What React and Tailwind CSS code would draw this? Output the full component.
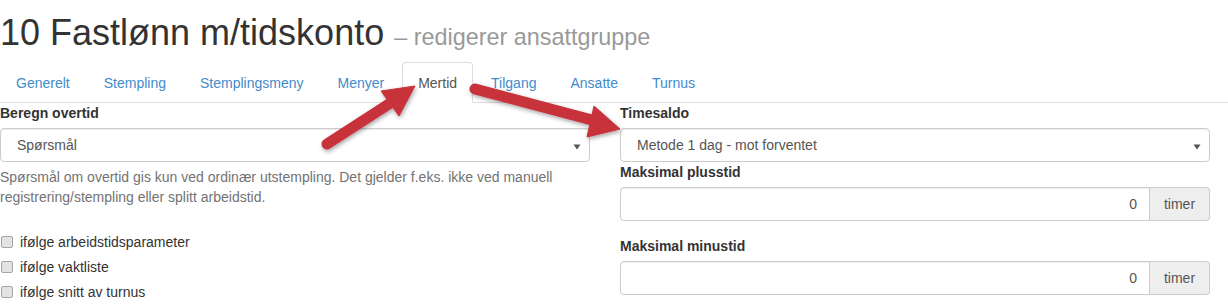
import React from 'react';

const tabs = ['Generelt', 'Stempling', 'Stemplingsmeny', 'Menyer', 'Mertid', 'Tilgang', 'Ansatte', 'Turnus'];

function Caret() {
    return (
        <svg width="8" height="6" viewBox="0 0 8 6" className="absolute right-[8px] top-[15px]">
            <path d="M0.5 0.5 L7.5 0.5 L4 5.5 Z" fill="#555" />
        </svg>
    );
}

function Select({ value }) {
    return (
        <div className="relative h-[34px] border border-[#ccc] rounded-[4px] bg-white shadow-[inset_0_1px_1px_rgba(0,0,0,0.075)] pl-[16px] flex items-center text-[#555]">
            {value}
            <Caret />
        </div>
    );
}

function TimerInput() {
    return (
        <div className="flex h-[34px]">
            <div className="flex-1 border border-[#ccc] rounded-l-[4px] shadow-[inset_0_1px_1px_rgba(0,0,0,0.075)] flex items-center justify-end pr-[12px] text-[#555]">0</div>
            <div className="w-[60px] border border-l-0 border-[#ccc] rounded-r-[4px] bg-[#eee] flex items-center justify-center text-[#555]">timer</div>
        </div>
    );
}

function Check({ label }) {
    return (
        <div className="flex items-center h-[20px] mt-[5px] first:mt-0">
            <span className="w-[12px] h-[12px] ml-[1px] rounded-[2px] border border-[#a5a5a5] bg-[#e3e3e3]" />
            <span className="ml-[7px]">{label}</span>
        </div>
    );
}

// piler som peker på fanen og på timesaldo-feltet
function Arrows() {
    return (
        <svg className="absolute inset-0 pointer-events-none" width="1228" height="305">
            <defs>
                <filter id="skygge" x="-20%" y="-20%" width="140%" height="140%">
                    <feDropShadow dx="1" dy="2" stdDeviation="2" floodColor="#000" floodOpacity="0.35" />
                </filter>
            </defs>
            <g filter="url(#skygge)" fill="#c8323a" stroke="#c8323a">
                <line x1="327" y1="144" x2="392" y2="102" strokeWidth="11" strokeLinecap="round" />
                <polygon points="415,86 399,116 381,91" strokeWidth="1" strokeLinejoin="round" />
                <line x1="475" y1="89" x2="592" y2="120" strokeWidth="11" strokeLinecap="round" />
                <polygon points="620,129 587,137 594,106" strokeWidth="1" strokeLinejoin="round" />
            </g>
        </svg>
    );
}

export default function App() {
    return (
        <div className="relative w-[1228px] h-[305px] overflow-hidden bg-white text-[#333] text-[14px] leading-[20px] font-['Liberation_Sans',Arial,sans-serif]">
            <h1 className="h-[40px] mt-[13px] text-[36px] leading-[40px] font-normal whitespace-nowrap">
                10 Fastlønn m/tidskonto <small className="text-[23.4px] text-[#999]">– redigerer ansattgruppe</small>
            </h1>

            <ul className="mt-[9px] flex border-b border-[#ddd] h-[41px]">
                {tabs.map(t => (
                    <li key={t} className="mr-[2px]">
                        {t === 'Mertid' ? (
                            <span className="block h-[41px] px-[15px] py-[10px] border border-[#ddd] border-b-transparent rounded-t-[4px] bg-white text-[#555]">{t}</span>
                        ) : (
                            <span className="block h-[41px] px-[15px] py-[10px] border border-transparent text-[#428bca]">{t}</span>
                        )}
                    </li>
                ))}
            </ul>

            <div className="flex gap-[30px]">
                <div className="w-[590px]">
                    <div className="font-bold mb-[5px]">Beregn overtid</div>
                    <Select value="Spørsmål" />
                    <p className="mt-[5px] text-[#737373]">
                        Spørsmål om overtid gis kun ved ordinær utstempling. Det gjelder f.eks. ikke ved manuell
                        <br />
                        registrering/stempling eller splitt arbeidstid.
                    </p>
                    <div className="mt-[25px]">
                        <Check label="ifølge arbeidstidsparameter" />
                        <Check label="ifølge vaktliste" />
                        <Check label="ifølge snitt av turnus" />
                    </div>
                </div>
                <div className="w-[590px]">
                    <div className="font-bold mb-[5px]">Timesaldo</div>
                    <Select value="Metode 1 dag - mot forventet" />
                    <div className="font-bold mb-[5px]">Maksimal plusstid</div>
                    <TimerInput />
                    <div className="font-bold mt-[15px] mb-[5px]">Maksimal minustid</div>
                    <TimerInput />
                </div>
            </div>

            <Arrows />
        </div>
    );
}
